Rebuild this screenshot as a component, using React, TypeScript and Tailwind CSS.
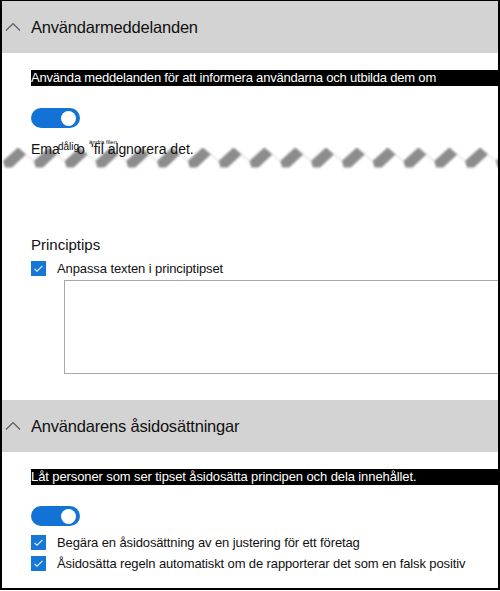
import React from "react";

const font = { fontFamily: '"Liberation Sans", Arial, sans-serif' };

function Chevron() {
  return (
    <svg width="16" height="10" viewBox="0 0 16 10" className="shrink-0">
      <polyline points="1,8.5 8,1.5 15,8.5" fill="none" stroke="#5a5a5a" strokeWidth="1.1" />
    </svg>
  );
}

function Toggle() {
  return (
    <div className="w-[49px] h-[20px] rounded-full bg-[#1272d6] relative">
      <div className="absolute right-[4px] top-[2.5px] w-[15px] h-[15px] rounded-full bg-white" />
    </div>
  );
}

function Check() {
  return (
    <div className="w-[15px] h-[15px] bg-[#1677d6] flex items-center justify-center shrink-0">
      <svg width="11" height="9" viewBox="0 0 11 9">
        <polyline points="1.5,4.8 4,7.2 9.5,1.8" fill="none" stroke="#e8f1fb" strokeWidth="1.1" />
      </svg>
    </div>
  );
}

function Header({ title }: { title: string }) {
  return (
    <div className="h-[52px] bg-[#d3d3d3] flex items-center pl-[3px] gap-[10px]">
      <Chevron />
      <span className="text-[16.5px] text-[#111] tracking-[-0.2px]">{title}</span>
    </div>
  );
}

function Zigzag() {
  const teeth = [];
  for (let i = 0; i < 17; i++) {
    const x = 1 + i * 30.8;
    teeth.push(
      <g key={i}>
        <polyline
          points={`${x + 15},1 ${x + 30.8},14`}
          fill="none"
          stroke="#cdcdcd"
          strokeWidth="1"
        />
        <polygon
          points={`${x},14 ${x + 15},0.5 ${x + 23},7.5 ${x + 9},20.5 ${x + 2},20.5`}
          fill="#8c8c8c"
        />
      </g>
    );
  }
  return (
    <svg width="496" height="23" viewBox="0 0 496 23" className="block">
      <defs>
        <filter id="bl" x="-10%" y="-30%" width="120%" height="160%">
          <feGaussianBlur stdDeviation="0.8" />
        </filter>
      </defs>
      <g filter="url(#bl)">{teeth}</g>
    </svg>
  );
}

export default function App() {
  return (
    <div style={font} className="w-[500px] h-[591px] bg-white overflow-hidden">
      <div className="w-[500px] h-[590px] border-l-2 border-r-2 border-t border-b-2 border-black flex flex-col">
        <Header title="Användarmeddelanden" />
        <div className="pl-[29px] pt-[17px]">
          <div className="h-[16px] bg-black text-white text-[13px] leading-[16px] whitespace-nowrap tracking-[-0.2px]">
            Använda meddelanden för att informera användarna och utbilda dem om
          </div>
          <div className="mt-[22px]">
            <Toggle />
          </div>
        </div>
        <div className="relative h-[40px] mt-[13px]">
          <div className="absolute left-0 top-[6px]">
            <Zigzag />
          </div>
          <div className="absolute left-[29px] top-0 h-[16px] text-[14px] text-[#111] leading-[16px] whitespace-nowrap">
            <span className="absolute left-0 top-0">Ema</span>
            <span className="absolute left-[27px] top-[-2px] text-[10px]">dålig</span>
            <span className="absolute left-[46px] top-0">o</span>
            <span className="absolute left-[58px] top-[-7px] text-[6px]">ändra filen</span>
            <span className="absolute left-[60px] top-0">'fil alg</span>
            <span className="absolute left-[95px] top-0">norera det.</span>
          </div>
        </div>
        <div className="pl-[29px] mt-[55px]">
          <div className="text-[15px] text-[#111] leading-[18px]">Principtips</div>
          <div className="flex items-center gap-[11px] mt-[7px]">
            <Check />
            <span className="text-[13px] text-[#111] leading-[15px] tracking-[-0.1px]">Anpassa texten i principtipset</span>
          </div>
        </div>
        <div className="ml-[62px] mt-[4px] h-[94px] border border-[#a8a8a8] border-r-0" />
        <div className="mt-[26px]">
          <Header title="Användarens åsidosättningar" />
        </div>
        <div className="pl-[29px] pt-[17px]">
          <div className="h-[16px] bg-black text-white text-[13px] leading-[16px] whitespace-nowrap tracking-[-0.1px]">
            Låt personer som ser tipset åsidosätta principen och dela innehållet.
          </div>
          <div className="mt-[21px]">
            <Toggle />
          </div>
          <div className="flex items-center gap-[11px] mt-[9px]">
            <Check />
            <span className="text-[13px] text-[#111] leading-[15px] tracking-[-0.12px]">
              Begära en åsidosättning av en justering för ett företag
            </span>
          </div>
          <div className="flex items-center gap-[11px] mt-[6px]">
            <Check />
            <span className="text-[13px] text-[#111] leading-[15px] tracking-[-0.12px]">
              Åsidosätta regeln automatiskt om de rapporterar det som en falsk positiv
            </span>
          </div>
        </div>
      </div>
    </div>
  );
}
